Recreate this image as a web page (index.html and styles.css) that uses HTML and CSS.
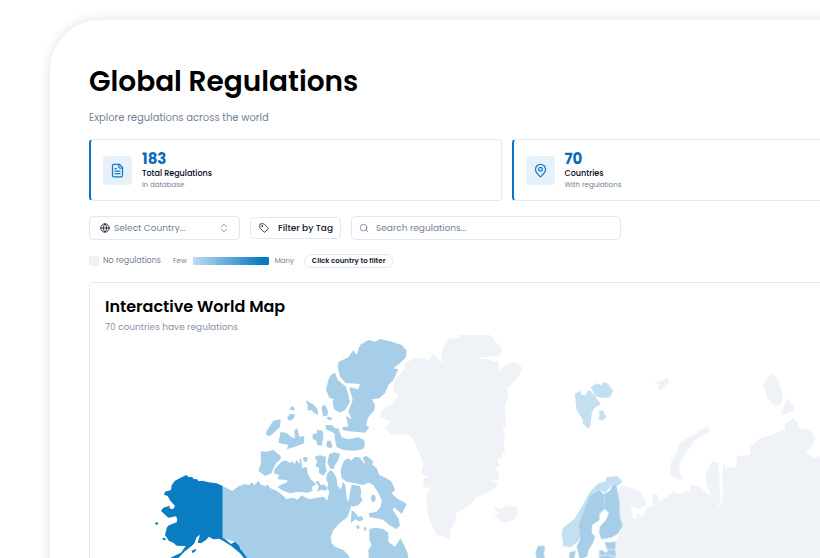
FILE: index.html
```html
<!DOCTYPE html>
<html lang="en">
<head>
<meta charset="utf-8">
<title>Global Regulations</title>
<link rel="stylesheet" href="styles.css">
</head>
<body>
<main class="panel">
  <h1 class="title">Global Regulations</h1>
  <p class="subtitle">Explore regulations across the world</p>

  <section class="stats">
    <article class="stat">
      <span class="stat-icon">
        <svg class="icon-lg" viewBox="0 0 24 24"><path d="M15 2H6a2 2 0 0 0-2 2v16a2 2 0 0 0 2 2h12a2 2 0 0 0 2-2V7Z"/><path d="M14 2v4a2 2 0 0 0 2 2h4M10 9H8M16 13H8M16 17H8"/></svg>
      </span>
      <div>
        <div class="stat-value">183</div>
        <div class="stat-label">Total Regulations</div>
        <div class="stat-note">In database</div>
      </div>
    </article>
    <article class="stat">
      <span class="stat-icon">
        <svg class="icon-lg" viewBox="0 0 24 24"><path d="M20 10c0 5-5.5 10.200-7.400 11.800a1 1 0 0 1-1.200 0C9.500 20.200 4 15 4 10a8 8 0 0 1 16 0"/><circle cx="12" cy="10" r="3"/></svg>
      </span>
      <div>
        <div class="stat-value">70</div>
        <div class="stat-label">Countries</div>
        <div class="stat-note">With regulations</div>
      </div>
    </article>
  </section>

  <div class="toolbar">
    <button class="country" type="button">
      <svg class="icon dark" viewBox="0 0 24 24"><circle cx="12" cy="12" r="10"/><path d="M12 2a14.500 14.500 0 0 0 0 20 14.500 14.500 0 0 0 0-20M2 12h20"/></svg>
      <span>Select Country...</span>
      <svg class="icon chevrons" viewBox="0 0 24 24"><path d="m6 15 6 6 6-6M6 9l6-6 6 6"/></svg>
    </button>
    <button class="tag" type="button">
      <svg class="icon dark" viewBox="0 0 24 24"><path d="M12.600 2.600A2 2 0 0 0 11.200 2H4a2 2 0 0 0-2 2v7.200a2 2 0 0 0 .6 1.400l8.700 8.700a2.400 2.400 0 0 0 3.400 0l6.600-6.600a2.400 2.400 0 0 0 0-3.400z"/><circle cx="7.500" cy="7.500" r="1"/></svg>
      Filter by Tag
    </button>
    <label class="search">
      <svg class="icon" viewBox="0 0 24 24"><circle cx="11" cy="11" r="8"/><path d="m21 21-4.300-4.300"/></svg>
      <input type="text" placeholder="Search regulations..." aria-label="Search regulations">
    </label>
  </div>

  <div class="legend">
    <span class="swatch"></span>
    <span class="legend-none">No regulations</span>
    <span class="few">Few</span>
    <span class="ramp"></span>
    <span class="many">Many</span>
    <span class="hint">Click country to filter</span>
  </div>

  <section class="map-card">
    <h2 class="map-title">Interactive World Map</h2>
    <p class="map-note">70 countries have regulations</p>
    <svg class="map" viewBox="90 333 833 300" role="img" aria-label="World map">
      <g class="mid" transform="translate(240 330) scale(.33333)">
        <path d="M340 60L350 74 360 45 385 30 405 35 420 27 455 35 485 45 500 62 498 82 480 100 460 115 475 118 460 150 445 165 435 190 418 205 396 208 405 225 403 240 385 262 378 285 388 292 375 308 345 305 325 304 308 300 308 290 325 290 318 258 335 268 325 245 338 210 328 172 355 178 360 162 330 160 318 160 300 140 293 110 296 95 325 82z"/>
        <path d="M272 135L285 128 293 150 318 170 325 195 330 215 315 240 300 248 282 238 278 215 282 208 268 203 258 180 265 150z"/>
        <path d="M197 210L222 225 232 238 235 256 222 248 215 240 203 242 203 225zM246 228l10-3 8 18-2 14-12 2-5-20zM258 262l12-1 8 6-10 4zM148 238l8-10 8 6-2 8zM142 262l8-10h14l-2 12-10 8-8-2z"/>
        <path d="M100 272L122 268 120 290 105 305 90 318 78 315 80 302zM122 305L140 310 155 322 165 325 163 300 172 295 178 320 193 318 192 340 165 350 140 358 145 345 115 338z"/>
        <path d="M218 312L232 310 230 300 248 302 250 325 245 347 232 345 228 330 218 328zM262 332h10l6 18-8 5-12-6zM256 285L275 285 285 295 295 295 300 310 305 322 325 328 355 322 372 330 375 345 368 358 345 362 310 360 290 352 285 330 283 310 258 298z"/>
      </g>
      <g class="mid" transform="translate(240 430) scale(.33333)">
        <path d="M-52 168L-23 183-3 168 15 162 27 165 37 157 43 166 55 152 63 165 77 168 83 163 90 174 110 182 133 200 138 207 160 203 172 209 178 203 185 196 195 202 210 208 230 203 250 200 262 212 265 198 268 185 262 175 265 160 258 150 262 130 272 120 282 130 290 145 292 165 300 178 306 170 308 155 316 165 318 182 320 205 326 215 330 185 335 165 345 165 360 168 364 185 362 200 368 210 355 225 340 230 332 227 332 235 322 262 300 278 280 300 272 322 275 340 285 350 310 360 325 375 332 390V500H120L10 384 0 352-15 335-45 327-52 324z"/>
        <path d="M62 64L78 65 100 60 122 78 122 88 108 100 98 120 95 130 75 138 55 122 63 100z"/>
        <path d="M128 92L140 92 150 100 158 92 162 104 170 90 180 104 178 88 183 85 187 115 200 110 203 130 212 148 228 162 215 172 218 182 205 188 175 185 150 190 125 180 112 170 143 155 140 150 112 148 118 136 102 130 104 118 112 108zM188 85l8-5 8 5-4 10h-8z"/>
        <path d="M224 80L240 76 258 80 256 105 260 122 250 137 236 128 238 115 226 108 232 95zM268 72L285 67 300 72 295 90 285 105 280 118 270 115 262 98zM226 155l10-3 5 12h12l10 10-5 8-15-2-12 5 6-15z"/>
        <path d="M312 92L325 85 333 92 345 80 358 82 372 100 395 102 410 115 418 135 440 145 455 155 465 180 455 190 470 205 490 215 500 222 485 252 462 232 458 240 475 265 480 285 470 298 448 285 430 270 410 265 388 262 386 250 410 245 422 230 425 210 415 190 400 165 385 158 370 165 345 160 320 155 305 145 302 125 305 110zM368 82l12-4 15 12 6 8-8 5-18-3z"/>
        <path d="M335 240l10 8 10 12 10-2 6 12-15 4-10-6-14 12zM348 288l8-2 4 8-8 4zM370 292h8l2 8-6 2z"/>
        <ellipse cx="400" cy="205" rx="7" ry="11"/>
        <path d="M388 297L405 293 430 297 445 308 445 335 465 350 482 325 492 345 503 370 505 390V480H390L385 360 395 345 388 330z"/>
      </g>
      <g class="strong" transform="translate(145 440) scale(.33333)">
        <path d="M124 105L132 112 141 110 146 117 157 118 160 124 172 122 190 127 215 130 233 138V294L240 297 258 312 270 305 283 318 286 327 300 345 312 362H304L285 340 262 320 235 303 222 296 205 298 192 290 183 300 168 310 158 308 165 284 155 292 148 310 140 318 118 335 100 354H75L108 338 122 318 95 317 85 308 72 303 60 285 66 262 72 256 95 247 97 238 93 229 70 233 48 213 55 203 75 197 73 205 84 208 90 198 76 182 68 168 57 164 60 155 78 150 80 136 90 122 107 113z"/>
        <path d="M30 248l8-1 2 6-8 1zM52 294h8l3 6h-8zM140 332l14-6-3 8-8 6z"/>
      </g>
      <g class="none" transform="translate(370 325) scale(.33333)">
        <path d="M268 30H360L378 50 396 72 388 92 345 96 320 102 352 102 375 112 380 104 388 118 384 138 402 124 432 110 455 125 455 140 440 160 420 185 412 190 415 210 405 245 407 290 412 305 395 310 405 325 400 355 406 380 395 388 398 400 382 403 388 425 372 425 385 440 388 465 362 468 385 475 375 490 345 508 318 518 300 540 275 555 258 565 256 590 243 610 238 644 225 635 200 630 180 590 172 560 168 510 185 485 165 490 158 475 162 460 175 458 152 445 160 420 148 385 130 345 112 328 62 330 44 305 62 290 30 275 32 258 62 240 85 212 68 195 75 165 105 130 105 115 135 100 165 98 172 110 190 85 202 100 230 122 215 105 215 85 225 55 238 40 265 40z"/>
        <path d="M374 545L390 552 415 542 440 543 445 565 430 585 405 593 385 585 372 570 390 565 375 555z"/>
      </g>
      <g transform="translate(530 360) scale(.33333)">
        <g class="none">
          <path d="M374 68l25-8 12-7 8 14-15 12-12 12-8-10 5-8zM728 38L740 55 750 78 758 105 758 125 745 138 725 130 712 115 705 92 698 75 715 50zM770 115L795 140 793 153 752 167 762 140z"/>
          <path d="M532 198L542 212 520 225 495 240 480 262 462 285 450 310 448 335 460 358 435 355 418 340 425 300 440 280 445 255 470 235 505 215z"/>
          <path d="M282 378L298 382 330 395 348 420 345 438 330 446 302 438 308 460 308 475 318 478 320 460 338 468 350 445 370 435 365 402 385 405 385 425 410 410 430 395 450 402 470 392 480 398 480 376 510 380 530 400 545 405 530 375 526 345 545 305 565 308 568 340 570 400 575 420 562 440 575 432 580 405 575 350 580 330 578 308 588 325 618 320 622 288 660 285 660 260 690 235 722 225 765 208 765 190 790 175 805 190 805 205 840 210 855 230 853 250 828 275 850 295 870 288 1000 300V700H256L258 545 265 530 278 500 272 470 270 420 260 395 275 375z"/>
        </g>
        <g class="low">
          <path d="M134 102L150 92 155 105 168 105 172 92 182 92 212 132 192 145 185 162 182 195 175 206 158 190 158 178 140 150zM182 82L200 70 215 76 220 66 232 70 250 92 240 112 215 114 195 108 190 95zM205 155l14-5 4 12 8 8-14 12-12-6 4-12z"/>
          <path d="M230 352L262 348 278 365 262 378 248 372 235 388 225 398 208 390 185 405 172 430 155 468 148 490 150 520 145 545 120 562 100 558 95 520 98 505 135 475 155 440 180 395 205 370 225 365z"/>
        </g>
        <g class="mid borders">
          <path d="M208 390L222 405 226 445 208 462 208 480 186 495 185 520 195 530 188 550 175 570 172 588 150 600 145 580 140 560 150 540 145 495 158 460 180 405z"/>
          <path d="M222 402L240 392 248 374 260 375 262 395 268 420 270 470 278 497 265 520 245 532 215 538 208 520 210 500 228 480 237 458 225 447z"/>
          <path d="M224 548L256 545 256 568 232 568zM208 572L216 570 228 580 235 569 256 570 257 590 230 584 208 586zM208 589L230 586 257 593V620H208z"/>
          <path d="M118 578l18-6-4 30h-14zM24 558h20v12l-3 12 5 20H20l-3-26z"/>
        </g>
      </g>
    </svg>
  </section>
</main>
</body>
</html>
```
FILE: styles.css
```css
* { box-sizing: border-box; }
body {
  margin: 0;
  padding: 20px 0 0 50px;
  height: 100vh;
  overflow: hidden;
  background: #fff;
  color: #020617;
  font-family: Poppins, Inter, "Open Sans", sans-serif;
}
h1, h2, p { margin: 0; }
svg { display: block; flex: none; }
button, input { font: inherit; }

/* The panel bleeds past the right and bottom window edges. */
.panel {
  min-height: 100vh;
  margin-right: -144px;
  padding: 44px 40px 0 39px;
  border-radius: 50px 0 0 0;
  background: #fff;
  box-shadow: 0 0 12px rgba(30, 50, 70, .14);
}
.title { font-size: 28px; line-height: 36px; font-weight: 600; color: #000; }
.subtitle { margin-top: 11px; font-size: 10px; line-height: 14px; color: #738297; }

.stats { display: grid; grid-template-columns: 1fr 1fr; gap: 10px; margin-top: 14px; }
.stat {
  display: flex;
  align-items: center;
  gap: 10px;
  height: 62px;
  padding: 0 12px;
  border: 1px solid #e5ebf3;
  border-left: 2px solid #0b72c4;
  border-radius: 4px;
}
.stat-icon {
  display: grid;
  place-items: center;
  width: 29px;
  height: 29px;
  border-radius: 4px;
  background: #e6f1f9;
  color: #167bc6;
}
.stat-value { font-size: 15px; line-height: 18px; font-weight: 700; color: #0b6cbc; }
.stat-label { font-size: 8px; line-height: 12px; font-weight: 500; }
.stat-note { font-size: 7px; line-height: 10px; color: #738297; }

.icon, .icon-lg {
  width: 10px;
  height: 10px;
  fill: none;
  stroke: currentColor;
  stroke-width: 2;
  stroke-linecap: round;
  stroke-linejoin: round;
}
.icon-lg { width: 15px; height: 15px; }
.dark { color: #10182b; }

.toolbar { display: flex; align-items: center; gap: 10px; margin-top: 15px; }
.country, .tag, .search {
  display: flex;
  align-items: center;
  height: 24px;
  border: 1px solid #e2e8f0;
  border-radius: 4px;
  background: #fff;
  font-size: 9px;
}
.country { width: 151px; padding: 0 10px; gap: 4px; color: #738297; }
.chevrons { margin-left: auto; }
.tag { width: 91px; height: 22px; padding: 0 8px; gap: 9px; font-weight: 500; color: #10182b; white-space: nowrap; }
.search { width: 270px; padding: 0 7px; gap: 7px; color: #738297; }
.search input { flex: 1; min-width: 0; padding: 0; border: 0; outline: 0; background: none; color: inherit; }
.search input::placeholder { color: #738297; opacity: 1; }

.legend { display: flex; align-items: center; height: 14px; margin-top: 14px; font-size: 7px; color: #738297; }
.swatch { width: 10px; height: 10px; margin-right: 4px; border: 1px solid #e6edf5; border-radius: 2px; background: #eff3f8; }
.legend-none { font-size: 8px; }
.few { margin-left: 12px; }
.ramp { width: 76px; height: 8px; margin: 0 6px; border-radius: 1px; background: linear-gradient(90deg, #bfdcef, #5aa5d8 50%, #0a7abf 90%); }
.hint { margin-left: 10px; padding: 0 7px; border: 1px solid #e2e8f0; border-radius: 8px; line-height: 12px; font-weight: 600; color: #10182b; }

.map-card { margin-top: 14px; padding-top: 14px; border: 1px solid #e2e8f0; border-radius: 4px; }
.map-title { padding-left: 15px; font-size: 16px; line-height: 20px; font-weight: 600; color: #000; }
.map-note { margin-top: 4px; padding-left: 15px; font-size: 9px; line-height: 12px; color: #8a91a5; }
.map { width: 100%; height: auto; }
.none { fill: #eff3f8; }
.low { fill: #c3e0f0; }
.mid { fill: #a6cee8; }
.strong { fill: #0a7cc2; }
.borders { stroke: #c3e0f0; stroke-width: 2; }
```
